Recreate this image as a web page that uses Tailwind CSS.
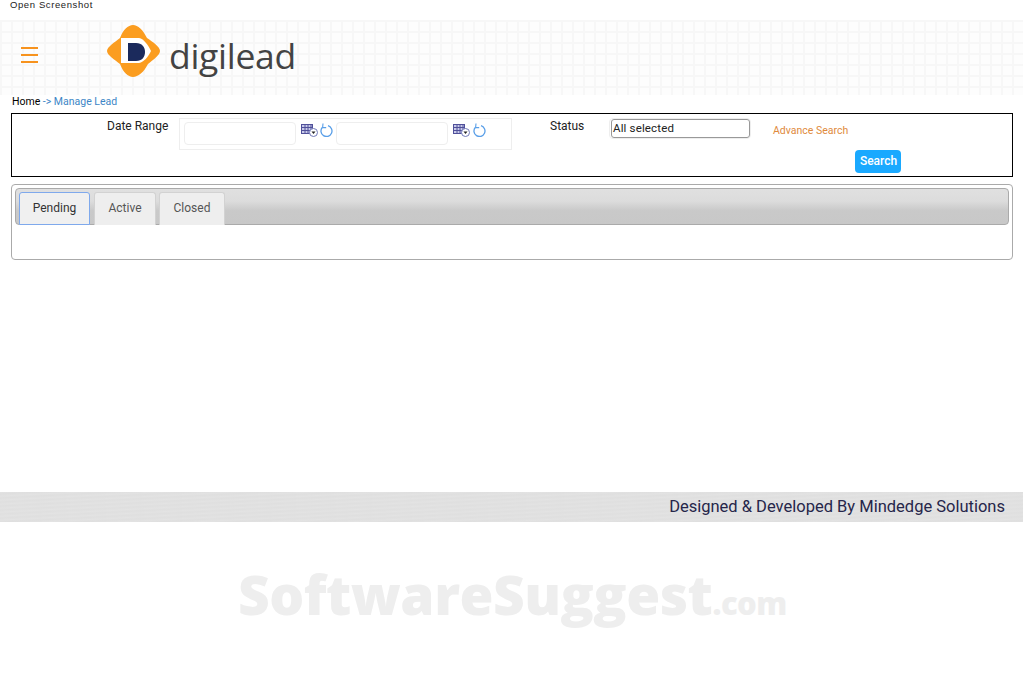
<!DOCTYPE html>
<html lang="en">
<head>
  <meta charset="UTF-8" />
  <meta name="viewport" content="width=device-width, initial-scale=1.0"/>
  <title>Manage Lead</title>
  <script src="https://cdn.jsdelivr.net/npm/@tailwindcss/browser@4"></script>
</head>
<body class="relative h-[697px] overflow-hidden bg-white font-['Roboto',sans-serif] text-black">

  <!-- top strip -->
  <div class="h-5 pl-[10px] font-['Liberation_Sans',sans-serif] text-[9.5px] leading-[10px] tracking-[0.6px] text-[#222]">Open Screenshot</div>

  <!-- header -->
  <header class="flex h-[75px] items-center bg-[#fdfdfd] bg-[linear-gradient(#f7f7f7_2px,transparent_2px),linear-gradient(90deg,#f7f7f7_2px,transparent_2px)] bg-size-[11px_11px]">
    <div class="ml-[21px] mt-[-6px] flex w-[17px] flex-col gap-[5px]">
      <span class="h-[2px] bg-[#f7931e]"></span>
      <span class="h-[2px] bg-[#f7931e]"></span>
      <span class="h-[2px] bg-[#f7931e]"></span>
    </div>
    <svg class="ml-[69px] mt-[-13px]" width="53" height="52" viewBox="0 0 53 52">
      <path fill="#fb9d20" d="M26 0C31 0 36 5 40 13C46 17 53 22 53 26C53 30 46 35 41 39C37 47 31 52 26 52C21 52 16 47 13 39C8 35 0 30 0 26C0 22 8 17 13 13C16 5 21 0 26 0Z"/>
      <path fill="#fff" d="M14 13H32C37 14 41 20 44 26C41 32 37 37 32 38H14Z"/>
      <path fill="#1b2a5c" d="M21 18H29C35 18 38 22 38 27C38 32 35 36 29 36H21Z"/>
    </svg>
    <span class="ml-[9px] mt-[-3px] font-['Open_Sans',sans-serif] text-[35.5px] leading-none tracking-[-0.3px] text-[#434343]">digilead</span>
  </header>

  <!-- breadcrumb -->
  <div class="mb-1 flex h-[14px] items-center pl-3 text-[10.5px] text-[#3d86c6]">
    <span class="text-black">Home</span>&nbsp;-&gt; Manage Lead
  </div>

  <!-- filter -->
  <section class="ml-[11px] h-[64px] w-[1002px] border border-black pt-1 text-[12px] text-[#222]">
    <div class="flex h-[32px] items-start">
      <label class="ml-[95px] mt-[1px] w-[72px] leading-[14px]">Date Range</label>
      <div class="flex h-[32px] w-[333px] items-start border border-[#eeeeee] pl-1 pt-[3px]">
        <input class="h-[23px] w-[112px] rounded-[4px] border border-[#eeeeee] bg-white" />
        <svg class="ml-[5px] mt-[2px]" width="17" height="13" viewBox="0 0 17 13">
          <rect x="0.5" y="0.5" width="11" height="9" fill="#c9cbea" stroke="#50509a"/>
          <path stroke="#50509a" d="M4 1V9M7 1V9M10 1V9M1 3.5H11M1 6.5H11"/>
          <circle cx="12.5" cy="8.5" r="4" fill="#fff" stroke="#7078b8"/>
          <path fill="#222" d="M10.5 7.5H14.5L12.5 10Z"/>
        </svg>
        <svg class="ml-[2px]" width="13" height="15" viewBox="0 0 13 15" fill="none" stroke="#5a9fe8" stroke-width="1.3">
          <path d="M2.3 5.4A5.5 5.5 0 1 0 8 3.7"/>
          <path d="M3 1.5L2.6 5.6H6.2" stroke-width="1.1"/>
        </svg>
        <input class="ml-[3px] h-[23px] w-[112px] rounded-[4px] border border-[#eeeeee] bg-white" />
        <svg class="ml-[5px] mt-[2px]" width="17" height="13" viewBox="0 0 17 13">
          <rect x="0.5" y="0.5" width="11" height="9" fill="#c9cbea" stroke="#50509a"/>
          <path stroke="#50509a" d="M4 1V9M7 1V9M10 1V9M1 3.5H11M1 6.5H11"/>
          <circle cx="12.5" cy="8.5" r="4" fill="#fff" stroke="#7078b8"/>
          <path fill="#222" d="M10.5 7.5H14.5L12.5 10Z"/>
        </svg>
        <svg class="ml-[3px]" width="13" height="15" viewBox="0 0 13 15" fill="none" stroke="#5a9fe8" stroke-width="1.3">
          <path d="M2.3 5.4A5.5 5.5 0 1 0 8 3.7"/>
          <path d="M3 1.5L2.6 5.6H6.2" stroke-width="1.1"/>
        </svg>
      </div>
      <label class="ml-[38px] mt-[1px] w-[59px] leading-[14px]">Status</label>
      <div class="h-[21px] w-[142px] rounded-[4px] border border-[#eeeeee] pl-[1px]">
        <div class="h-[19px] w-[139px] rounded-[3px] border border-[#999999] bg-white pl-[1px] text-[11.5px] leading-[17px] tracking-[0.15px] text-[#222]">All selected</div>
      </div>
      <a class="ml-[22px] mt-[7px] text-[10.5px] leading-3 text-[#e08a3c]">Advance Search</a>
    </div>
    <button class="ml-[843px] block h-[23px] w-[46px] rounded-[4px] bg-[#1aa9ff] pb-[2px] pl-[1px] text-[12px] font-medium text-white">Search</button>
  </section>

  <!-- tabs -->
  <section class="ml-[11px] mt-[7px] h-[76px] w-[1002px] rounded-[4px] border border-[#aaaaaa] pl-[3px] pt-[3px]">
    <div class="flex h-[37px] w-[994px] gap-[3px] rounded-[4px] border border-[#aaaaaa] bg-[linear-gradient(#e0e0e0_0%,#dcdcdc_35%,#c9c9c9_62%,#c8c8c8_100%)] pl-[3px] pt-[3px] text-[12px]">
      <div class="flex h-[33px] w-[71px] items-center justify-center rounded-t-[3px] border border-[#7fa9ec] bg-[#f0f0f0] pb-[2px] text-[#333]">Pending</div>
      <div class="ml-[1px] flex h-[33px] w-[62px] items-center justify-center rounded-t-[3px] border border-b-0 border-[#d2d2d2] bg-[#eeeeee] pb-[2px] text-[#555]">Active</div>
      <div class="flex h-[33px] w-[66px] items-center justify-center rounded-t-[3px] border border-b-0 border-[#d2d2d2] bg-[#eeeeee] pb-[2px] text-[#555]">Closed</div>
    </div>
  </section>

  <!-- footer -->
  <footer class="mt-[232px] flex h-[30px] items-center justify-end bg-[#e1e1e1] bg-[repeating-linear-gradient(177deg,#e3e3e3_0px,#dfdfdf_2px,#e2e2e2_4px)] pr-[18px] text-[16.5px] text-[#26264a]">
    Designed &amp; Developed By Mindedge Solutions
  </footer>

  <!-- watermark -->
  <div class="absolute left-[238px] top-[566px] flex items-baseline font-['Open_Sans',sans-serif] font-extrabold leading-none tracking-[-0.5px] text-[#eeeeee]">
    <span class="text-[55px]">SoftwareSuggest</span><span class="text-[31px] tracking-[-0.5px]">.com</span>
  </div>

</body>
</html>
